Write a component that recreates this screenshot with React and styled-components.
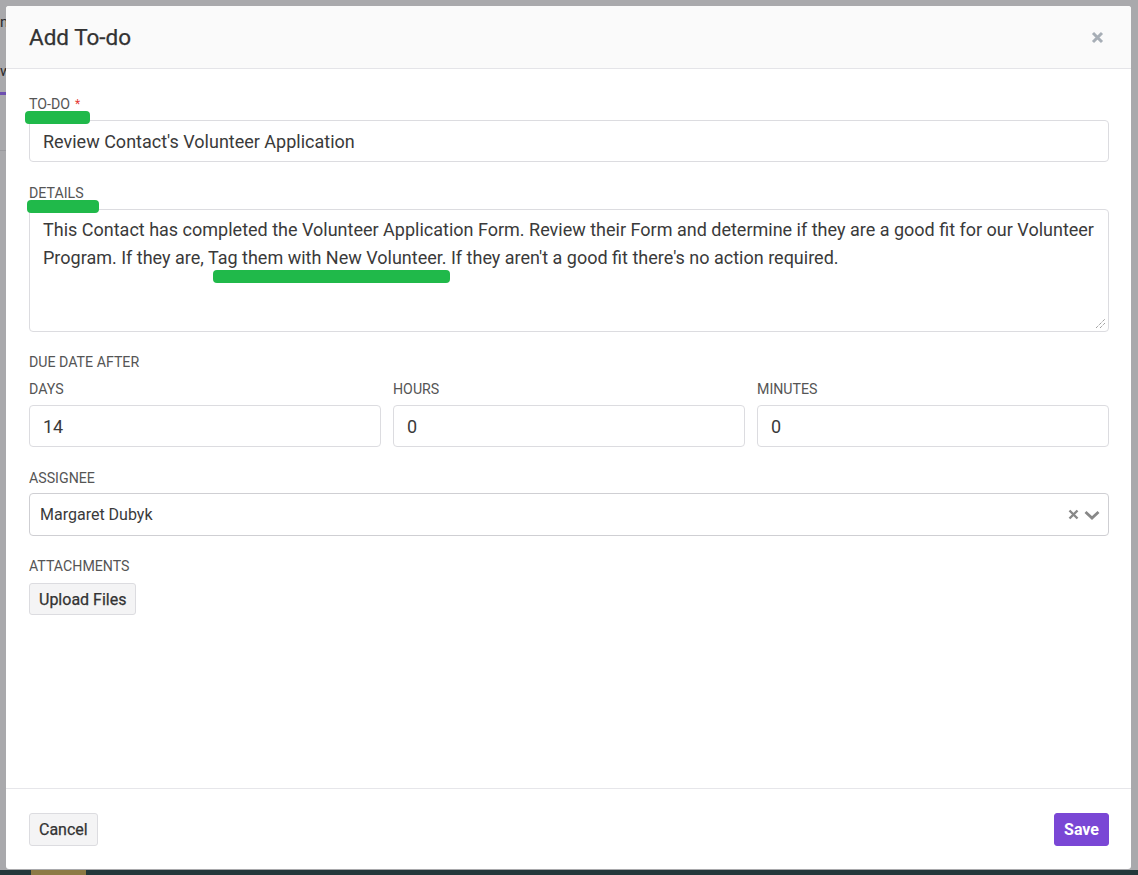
import React from 'react';
import styled, { createGlobalStyle } from 'styled-components';

const GlobalStyle = createGlobalStyle`
  html, body {
    margin: 0;
    padding: 0;
    background: #a9a9ac;
    font-family: Roboto, "Liberation Sans", Arial, sans-serif;
  }
  * { box-sizing: border-box; }
`;

const Backdrop = styled.div`
  position: relative;
  height: 875px;
  padding: 6px 7px 6px 6px;
  background: #a9a9ac;
  overflow: hidden;
`;

const PageHint = styled.div`
  position: absolute;
  left: ${p => p.x}px;
  top: ${p => p.y}px;
  width: ${p => p.w}px;
  height: ${p => p.h}px;
  background: ${p => p.bg};
`;

const PageText = styled.span`
  position: absolute;
  left: ${p => p.x}px;
  top: ${p => p.y}px;
  font-size: 15px;
  color: #2b2b2e;
  line-height: 1;
`;

const BottomStrip = styled.div`
  position: absolute;
  left: 0;
  right: 0;
  bottom: 0;
  height: 5px;
  background: #23383b;
`;

const Modal = styled.div`
  position: relative;
  height: 863px;
  display: flex;
  flex-direction: column;
  background: #fff;
  border-radius: 3px;
  overflow: hidden;
`;

const Header = styled.header`
  height: 63px;
  flex-shrink: 0;
  display: flex;
  align-items: center;
  justify-content: space-between;
  padding: 0 23px;
  background: #fafafa;
  border-bottom: 1px solid #e4e4e8;
`;

const Title = styled.h2`
  margin: 0;
  font-size: 22.5px;
  font-weight: 400;
  color: #333;
  -webkit-text-stroke: 0.25px #333;
`;

const Close = styled.button`
  border: none;
  background: none;
  padding: 0;
  width: 16px;
  height: 16px;
  margin-right: 3px;
  display: flex;
  align-items: center;
  justify-content: center;
  cursor: pointer;
`;

const Body = styled.div`
  flex: 1;
  padding: 26px 22px 0 23px;
`;

const Group = styled.div`
  position: relative;
  margin-bottom: ${p => p.mb ?? 22}px;
`;

const Label = styled.div`
  font-size: 14.2px;
  line-height: 18px;
  color: #555;
  text-transform: uppercase;
  margin-bottom: ${p => p.mb ?? 7}px;
`;

const Star = styled.span`
  color: #e53935;
  margin-left: 5px;
  font-size: 12px;
  vertical-align: top;
`;

const Input = styled.div`
  height: 42px;
  display: flex;
  align-items: center;
  padding: 0 13px;
  border: 1px solid #dcdce0;
  border-radius: 4px;
  font-size: 18px;
  color: #3a3a3a;
  background: #fff;
`;

const TextArea = styled.div`
  position: relative;
  height: 123px;
  padding: 6px 13px;
  border: 1px solid #dcdce0;
  border-radius: 4px;
  font-size: 18px;
  line-height: 27.5px;
  color: #3a3a3a;
`;

const Grip = styled.svg`
  position: absolute;
  right: 2px;
  bottom: 2px;
`;

const Row = styled.div`
  display: grid;
  grid-template-columns: repeat(3, 1fr);
  gap: 12px;
`;

const Select = styled.div`
  height: 43px;
  display: flex;
  align-items: center;
  justify-content: space-between;
  padding: 0 8px 0 10px;
  border: 1px solid #cfcfd3;
  border-radius: 4px;
  font-size: 16px;
  color: #3a3a3a;
`;

const SelectIcons = styled.div`
  display: flex;
  align-items: center;
  gap: 5px;
`;

const Button = styled.button`
  height: ${p => p.h ?? 33}px;
  padding: 0 9px;
  border-radius: 3px;
  font-family: inherit;
  font-size: 16px;
  font-weight: ${p => (p.primary ? 700 : 400)};
  color: ${p => (p.primary ? '#fff' : '#333')};
  background: ${p => (p.primary ? '#7a47d5' : '#f4f4f5')};
  border: 1px solid ${p => (p.primary ? '#7a47d5' : '#dcdce0')};
  -webkit-text-stroke: ${p => (p.primary ? 0 : 0.25)}px #333;
  cursor: pointer;
`;

const Footer = styled.footer`
  flex-shrink: 0;
  height: 81px;
  display: flex;
  align-items: center;
  justify-content: space-between;
  padding: 0 22px 0 23px;
  border-top: 1px solid #e6e6ea;
`;

const Mark = styled.div`
  position: absolute;
  left: ${p => p.x}px;
  top: ${p => p.y}px;
  width: ${p => p.w}px;
  height: 13px;
  border-radius: 4px;
  background: #20b94a;
`;

const CloseIcon = () => (
  <svg width="13" height="13" viewBox="0 0 13 13">
    <path d="M2 2 L11 11 M11 2 L2 11" stroke="#a7aeb6" strokeWidth="3" strokeLinecap="butt" />
  </svg>
);

export default function App() {
  return (
    <>
      <GlobalStyle />
      <Backdrop>
        <PageText x={0} y={15}>nt</PageText>
        <PageText x={0} y={64}>w</PageText>
        <PageHint x={0} y={92} w={6} h={3} bg="#6d4fb0" />
        <PageHint x={0} y={150} w={6} h={1} bg="#9a9a9e" />
        <BottomStrip />
        <PageHint x={31} y={870} w={55} h={5} bg="#8d7a45" />
        <Modal>
          <Header>
            <Title>Add To-do</Title>
            <Close aria-label="Close"><CloseIcon /></Close>
          </Header>
          <Body>
            <Group>
              <Label>To-do<Star>*</Star></Label>
              <Input>Review Contact's Volunteer Application</Input>
              <Mark x={-4} y={16} w={65} />
            </Group>
            <Group mb={21}>
              <Label>Details</Label>
              <TextArea>
                This Contact has completed the Volunteer Application Form. Review their Form and determine if they are a good fit for our Volunteer Program. If they are, Tag them with New Volunteer. If they aren't a good fit there's no action required.
                <Grip width="11" height="11" viewBox="0 0 11 11">
                  <path d="M1 10 L10 1 M5 10 L10 5" stroke="#777" strokeWidth="1" strokeDasharray="1 1" />
                </Grip>
              </TextArea>
              <Mark x={-2} y={16} w={72} />
              <Mark x={184} y={86} w={237} />
            </Group>
            <Group>
              <Label mb={9}>Due date after</Label>
              <Row>
                <div>
                  <Label>Days</Label>
                  <Input>14</Input>
                </div>
                <div>
                  <Label>Hours</Label>
                  <Input>0</Input>
                </div>
                <div>
                  <Label>Minutes</Label>
                  <Input>0</Input>
                </div>
              </Row>
            </Group>
            <Group mb={21}>
              <Label mb={6}>Assignee</Label>
              <Select>
                Margaret Dubyk
                <SelectIcons>
                  <svg width="11" height="11" viewBox="0 0 11 11">
                    <path d="M1.5 1.5 L9.5 9.5 M9.5 1.5 L1.5 9.5" stroke="#888" strokeWidth="2.4" />
                  </svg>
                  <svg width="16" height="10" viewBox="0 0 16 10">
                    <path d="M1.5 2 L8 8 L14.5 2" fill="none" stroke="#888" strokeWidth="2.8" />
                  </svg>
                </SelectIcons>
              </Select>
            </Group>
            <Group>
              <Label mb={8}>Attachments</Label>
              <Button h={32}>Upload Files</Button>
            </Group>
          </Body>
          <Footer>
            <Button>Cancel</Button>
            <Button primary>Save</Button>
          </Footer>
        </Modal>
      </Backdrop>
    </>
  );
}
